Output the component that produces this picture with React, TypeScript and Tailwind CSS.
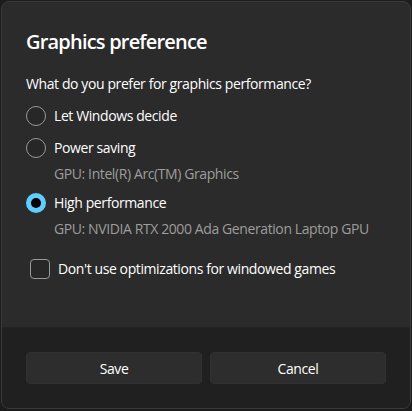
import React from "react";

function Radio({ checked }: { checked?: boolean }) {
  if (checked) {
    return (
      <span className="flex h-5 w-5 shrink-0 items-center justify-center rounded-full bg-[#60cdff]">
        <span className="h-[10px] w-[10px] rounded-full bg-black" />
      </span>
    );
  }
  return <span className="h-5 w-5 shrink-0 rounded-full border border-[#9a9a9a] bg-[#272727]" />;
}

export default function App() {
  return (
    <div
      className="h-[411px] w-[412px] whitespace-nowrap bg-[#1c1c1c] p-px text-white tracking-[-0.4px]"
      style={{ fontFamily: '"Segoe UI", "Open Sans", "Noto Sans", sans-serif' }}
    >
      <div className="flex h-[408px] flex-col overflow-hidden rounded-lg border border-[#3a3a3a] bg-[#2b2b2b]">
        <div className="flex flex-1 flex-col px-[24px] pt-[26px]">
          <h1 className="text-[20px] font-semibold leading-[28px] tracking-[-0.8px]">Graphics preference</h1>
          <p className="mt-[18px] text-[14px] leading-[20px]">What do you prefer for graphics performance?</p>
          <div className="mt-[12px] flex items-center gap-[8px]">
            <Radio />
            <span className="text-[14px] leading-[20px]">Let Windows decide</span>
          </div>
          <div className="mt-[12px] flex items-center gap-[8px]">
            <Radio />
            <span className="text-[14px] leading-[20px]">Power saving</span>
          </div>
          <p className="ml-[28px] mt-[6px] text-[14px] leading-[20px] text-[#9d9d9d]">GPU: Intel(R) Arc(TM) Graphics</p>
          <div className="mt-[9px] flex items-center gap-[8px]">
            <Radio checked />
            <span className="text-[14px] leading-[20px]">High performance</span>
          </div>
          <p className="ml-[28px] mt-[6px] text-[14px] leading-[20px] text-[#9d9d9d]">
            GPU: NVIDIA RTX 2000 Ada Generation Laptop GPU
          </p>
          <div className="ml-[4px] mt-[20px] flex items-center gap-[8px]">
            <span className="h-5 w-5 shrink-0 rounded-[4px] border border-[#9a9a9a] bg-[#272727]" />
            <span className="text-[14px] leading-[20px]">Don't use optimizations for windowed games</span>
          </div>
        </div>
        <div className="flex h-[81px] shrink-0 items-start gap-[8px] border-t border-[#232323] bg-[#202020] px-[24px] pt-[24px]">
          <button className="h-[32px] flex-1 rounded-[4px] border border-[#303030] bg-[#2d2d2d] text-[14px]">Save</button>
          <button className="h-[32px] flex-1 rounded-[4px] border border-[#303030] bg-[#2d2d2d] text-[14px]">Cancel</button>
        </div>
      </div>
    </div>
  );
}
